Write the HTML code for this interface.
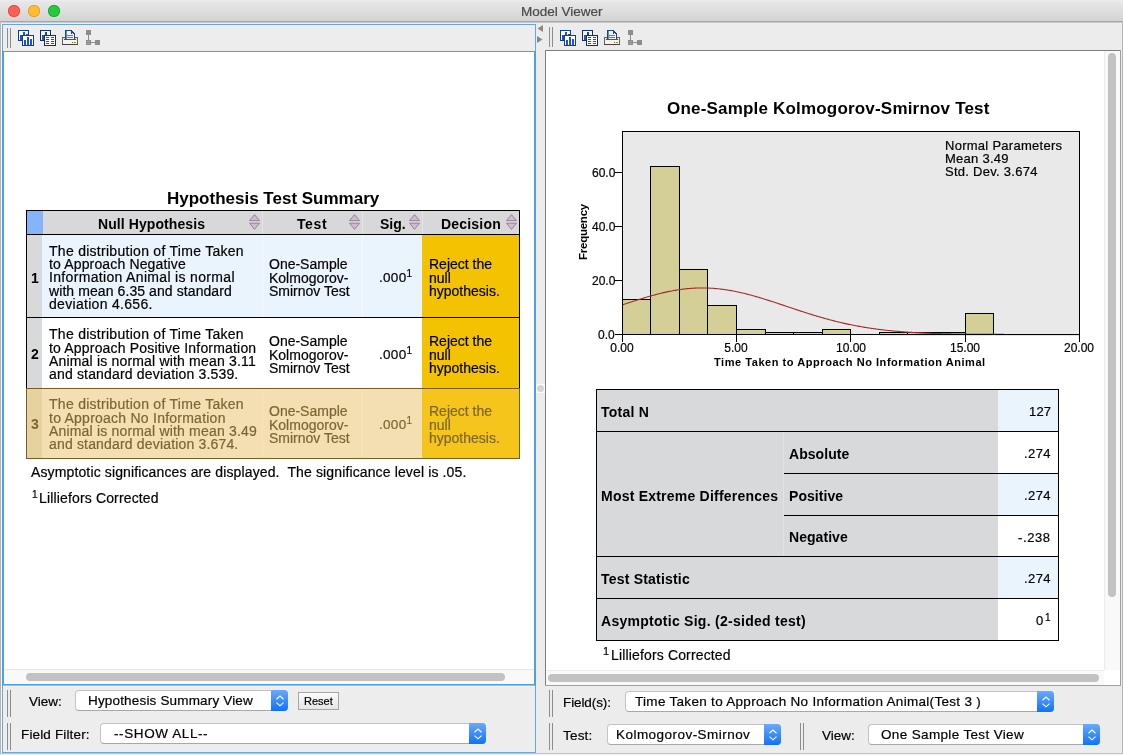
<!DOCTYPE html>
<html><head><meta charset="utf-8">
<style>
*{box-sizing:border-box;margin:0;padding:0}
html,body{width:1123px;height:755px;overflow:hidden}
body{position:relative;background:#ececec;font-family:"Liberation Sans",sans-serif;color:#000;font-size:14px}
.a{position:absolute}
.t{position:absolute;white-space:pre;line-height:1;will-change:transform;-webkit-text-stroke:0.2px currentColor}
.t[style*="bold"]{-webkit-text-stroke:0}
</style></head><body>
<div class="a" style="left:0px;top:0px;width:1123px;height:755px;background:#ececec;"></div>
<div class="a" style="left:0px;top:22px;width:1px;height:732px;background:#b4b4b4;"></div>
<div class="a" style="left:1px;top:22px;width:1px;height:731px;background:#f7f7f7;"></div>
<div class="a" style="left:1122px;top:22px;width:1px;height:733px;background:#b4b4b4;"></div>
<div class="a" style="left:0px;top:753px;width:1123px;height:1px;background:#c2c2c2;"></div>
<div class="a" style="left:0px;top:754px;width:1123px;height:1px;background:#f2f2f2;"></div>
<div class="a" style="left:0;top:0;width:1123px;height:23px;border-radius:5px 5px 0 0;background:linear-gradient(#f0f0f0 0px,#e8e8e8 1px,#d4d4d4 20px);"></div>
<div class="a" style="left:0px;top:21px;width:1123px;height:1px;background:#a6a6a6;"></div>
<div class="a" style="left:0px;top:22px;width:1123px;height:1px;background:#cbcbcb;"></div>
<div class="a" style="left:8px;top:5px;width:12px;height:12px;border-radius:50%;background:#fe5f57;box-shadow:inset 0 0 0 0.8px #e0443e"></div>
<div class="a" style="left:28px;top:5px;width:12px;height:12px;border-radius:50%;background:#febc2e;box-shadow:inset 0 0 0 0.8px #dc9d1c"></div>
<div class="a" style="left:48px;top:5px;width:12px;height:12px;border-radius:50%;background:#28c840;box-shadow:inset 0 0 0 0.8px #14a524"></div>
<div class="t" style="top:5px;font-size:13.5px;left:521px;color:#4a4a4a;">Model Viewer</div>
<div class="a" style="left:2px;top:24px;width:534px;height:729px;background:#6aa5dd;"></div>
<div class="a" style="left:3px;top:25px;width:532px;height:26px;background:#ededed;"></div>
<div class="a" style="left:3px;top:51px;width:532px;height:1px;background:#4e9fe4;"></div>
<div class="a" style="left:3px;top:52px;width:532px;height:617px;background:#ffffff;"></div>
<div class="a" style="left:3px;top:52px;width:1px;height:633px;background:#4e9fe4;"></div>
<div class="a" style="left:2px;top:52px;width:1px;height:633px;background:#4e9fe4;"></div>
<div class="a" style="left:4px;top:669px;width:531px;height:1px;background:#e8e8e8;"></div>
<div class="a" style="left:4px;top:670px;width:531px;height:14px;background:#f9f9f9;"></div>
<div class="a" style="left:26px;top:673px;width:479px;height:8px;border-radius:4px;background:#c2c2c2"></div>
<div class="a" style="left:3px;top:685px;width:532px;height:67px;background:#ededed;"></div>
<div class="a" style="left:3px;top:684px;width:532px;height:1px;background:#4e9fe4;"></div>
<div class="a" style="left:3px;top:685px;width:532px;height:1px;background:#8fc0ee;"></div>
<div class="a" style="left:534px;top:52px;width:1px;height:633px;background:#4e9fe4;"></div>
<div class="a" style="left:535px;top:51px;width:1px;height:635px;background:#4e9fe4;"></div>
<div class="a" style="left:2px;top:51px;width:534px;height:1px;background:#4e9fe4;"></div>
<div class="a" style="left:3px;top:686px;width:532px;height:1px;background:#f5f2ef;"></div>
<div class="a" style="left:7px;top:28px;width:1px;height:20px;background:#8d8d8d;"></div>
<div class="a" style="left:7px;top:690px;width:1px;height:27px;background:#8d8d8d;"></div>
<div class="a" style="left:7px;top:723px;width:1px;height:27px;background:#8d8d8d;"></div>
<div class="a" style="left:10px;top:28px;width:1px;height:20px;background:#8d8d8d;"></div>
<div class="a" style="left:10px;top:690px;width:1px;height:27px;background:#8d8d8d;"></div>
<div class="a" style="left:10px;top:723px;width:1px;height:27px;background:#8d8d8d;"></div>
<div class="a" style="left:545px;top:50px;width:576px;height:636px;background:#7e7e7e;"></div>
<div class="a" style="left:546px;top:51px;width:574px;height:634px;background:#ffffff;"></div>
<div class="a" style="left:1120px;top:50px;width:1px;height:636px;background:#a0a0a0;"></div>
<div class="a" style="left:545px;top:685px;width:576px;height:1px;background:#a0a0a0;"></div>
<div class="a" style="left:1104px;top:51px;width:1px;height:619px;background:#ececec;"></div>
<div class="a" style="left:1105px;top:51px;width:15px;height:619px;background:#f9f9f9;"></div>
<div class="a" style="left:1108px;top:53px;width:8px;height:544px;border-radius:4px;background:#c2c2c2"></div>
<div class="a" style="left:546px;top:670px;width:558px;height:1px;background:#ececec;"></div>
<div class="a" style="left:546px;top:671px;width:558px;height:14px;background:#f9f9f9;"></div>
<div class="a" style="left:548px;top:674px;width:551px;height:8px;border-radius:4px;background:#c2c2c2"></div>
<div class="a" style="left:549px;top:27px;width:1px;height:20px;background:#8d8d8d;"></div>
<div class="a" style="left:549px;top:690px;width:1px;height:27px;background:#8d8d8d;"></div>
<div class="a" style="left:549px;top:723px;width:1px;height:27px;background:#8d8d8d;"></div>
<div class="a" style="left:552px;top:27px;width:1px;height:20px;background:#8d8d8d;"></div>
<div class="a" style="left:552px;top:690px;width:1px;height:27px;background:#8d8d8d;"></div>
<div class="a" style="left:552px;top:723px;width:1px;height:27px;background:#8d8d8d;"></div>
<div class="a" style="left:800px;top:723px;width:1px;height:27px;background:#8d8d8d;"></div>
<div class="a" style="left:803px;top:723px;width:1px;height:27px;background:#8d8d8d;"></div>
<svg class="a" style="left:536px;top:24px" width="9" height="22"><path d="M7,1 L1.5,4.5 L7,8 Z" fill="#878787"/><path d="M1,12 L6.5,15.5 L1,19 Z" fill="#878787"/></svg>
<div class="a" style="left:536px;top:384px;width:9px;height:9px;background:#fbfbfb;"></div>
<div class="a" style="left:537px;top:385px;width:7px;height:7px;border-radius:50%;background:#d4d4d4"></div>
<svg class="a" style="left:0;top:0" width="1123" height="60" shape-rendering="crispEdges"><g id="icons">
  <rect x="18.5" y="30.5" width="10" height="10" fill="#fff" stroke="#0d3c9e"/>
  <rect x="20" y="35" width="2" height="5" fill="#1d52d8"/><rect x="23" y="32" width="2" height="8" fill="#1d52d8"/><rect x="26" y="34" width="2" height="6" fill="#1d52d8"/>
  <rect x="22.5" y="35.5" width="11" height="10" fill="#fff" stroke="#0d3c9e"/>
  <rect x="24" y="40" width="2" height="5" fill="#1d52d8"/><rect x="27" y="37" width="2" height="8" fill="#1d52d8"/><rect x="30" y="39" width="2" height="6" fill="#1d52d8"/>
  <rect x="40.5" y="30.5" width="10" height="10" fill="#eef6ff" stroke="#0c2f6c"/>
  <rect x="42" y="35" width="2" height="5" fill="#3a4fb0"/><rect x="45" y="32" width="2" height="8" fill="#24477a"/>
  <rect x="44.5" y="35.5" width="11" height="10" fill="#fff" stroke="#0c2f6c"/>
  <g fill="#d0102a"><rect x="46" y="37" width="3" height="1"/><rect x="51" y="37" width="3" height="1"/><rect x="46" y="39" width="3" height="1"/><rect x="51" y="39" width="3" height="1"/><rect x="46" y="41" width="3" height="1"/><rect x="51" y="41" width="3" height="1"/><rect x="46" y="43" width="3" height="1"/><rect x="51" y="43" width="3" height="1"/></g>
  <rect x="62.5" y="37.5" width="15" height="7" fill="#e4e0dc" stroke="#6a605c"/>
  <rect x="62" y="44" width="16" height="1" fill="#4a403e"/>
  <path d="M65.5,39.5 V30.5 H71.5 L74.5,33.5 V39.5" fill="#eef3fa" stroke="#1c4870"/>
  <rect x="64" y="39" width="12" height="1" fill="#5a504c"/>
  <rect x="63" y="40" width="14" height="4" fill="#f6f4f0"/>
  <path d="M71,30.5 L71,34 L74.5,34 Z" fill="#1c4870"/><rect x="72" y="33" width="1" height="0.5" fill="#cfe0f0"/>
  <rect x="66" y="31" width="1" height="8" fill="#6a8cb0"/>
  <rect x="67" y="35" width="6" height="1" fill="#5b7fa8"/><rect x="67" y="37" width="6" height="1" fill="#5b7fa8"/>
  <rect x="72" y="42" width="1" height="1" fill="#f02010"/><rect x="74" y="42" width="2" height="1" fill="#40b040"/>
  <rect x="86" y="30" width="5" height="5" fill="#8c8c8c"/>
  <rect x="88" y="35" width="1" height="5" fill="#8c8c8c"/>
  <rect x="86" y="40" width="5" height="5" fill="#8c8c8c"/>
  <rect x="87" y="41" width="3" height="1" fill="#a4a4a4"/><rect x="87" y="43" width="3" height="1" fill="#a4a4a4"/>
  <rect x="91" y="42" width="4" height="1" fill="#8c8c8c"/>
  <rect x="95" y="40" width="5" height="5" fill="#8c8c8c"/>
</g><use href="#icons" x="542" y="0"/></svg>
<div class="t" style="top:190px;font-size:17px;left:167px;font-weight:bold;">Hypothesis Test Summary</div>
<div class="a" style="left:26px;top:210px;width:494px;height:249px;background:#000;"></div>
<div class="a" style="left:27px;top:211px;width:16px;height:23px;background:#83b5f8;"></div>
<div class="a" style="left:43px;top:211px;width:476px;height:23px;background:#d8d8da;"></div>
<div class="a" style="left:27px;top:235px;width:15px;height:82px;background:#d8d9db;"></div>
<div class="a" style="left:42px;top:235px;width:380px;height:82px;background:#eaf4fd;"></div>
<div class="a" style="left:422px;top:235px;width:97px;height:82px;background:#f3c200;"></div>
<div class="a" style="left:27px;top:318px;width:15px;height:70px;background:#d8d9db;"></div>
<div class="a" style="left:42px;top:318px;width:380px;height:70px;background:#ffffff;"></div>
<div class="a" style="left:422px;top:318px;width:97px;height:70px;background:#f3c200;"></div>
<div class="a" style="left:26px;top:388px;width:494px;height:71px;background:#7b5d24;"></div>
<div class="a" style="left:27px;top:389px;width:15px;height:69px;background:#e6d29e;"></div>
<div class="a" style="left:42px;top:389px;width:380px;height:69px;background:#f3dfb1;"></div>
<div class="a" style="left:422px;top:389px;width:97px;height:69px;background:#f5c51c;"></div>
<div class="a" style="left:262px;top:211px;width:1px;height:23px;background:#e6e6e8;"></div>
<div class="a" style="left:362px;top:211px;width:1px;height:23px;background:#e6e6e8;"></div>
<div class="a" style="left:422px;top:211px;width:1px;height:23px;background:#e6e6e8;"></div>
<div class="a" style="left:262px;top:235px;width:1px;height:82px;background:#f2f8fe;"></div>
<div class="a" style="left:262px;top:389px;width:1px;height:69px;background:#f6e5bb;"></div>
<div class="a" style="left:362px;top:235px;width:1px;height:82px;background:#f2f8fe;"></div>
<div class="a" style="left:362px;top:389px;width:1px;height:69px;background:#f6e5bb;"></div>
<div class="t" style="top:217px;font-size:14px;left:98px;font-weight:bold;letter-spacing:0.08px;">Null Hypothesis</div>
<div class="t" style="top:217px;font-size:14px;left:297px;font-weight:bold;letter-spacing:0.6px;">Test</div>
<div class="t" style="top:217px;font-size:14px;left:380px;font-weight:bold;">Sig.</div>
<div class="t" style="top:217px;font-size:14px;left:441px;font-weight:bold;letter-spacing:0.2px;">Decision</div>
<div class="t" style="top:271px;font-size:14px;left:31px;font-weight:bold;">1</div>
<div class="t" style="top:244px;font-size:14px;left:49px;letter-spacing:0.28px;">The distribution of Time Taken</div>
<div class="t" style="top:257px;font-size:14px;left:49px;letter-spacing:0.15px;">to Approach Negative</div>
<div class="t" style="top:270px;font-size:14px;left:49px;letter-spacing:0.33px;">Information Animal is normal</div>
<div class="t" style="top:284px;font-size:14px;left:49px;letter-spacing:0.085px;">with mean 6.35 and standard</div>
<div class="t" style="top:297px;font-size:14px;left:49px;letter-spacing:0.3px;">deviation 4.656.</div>
<div class="t" style="top:257px;font-size:14px;left:269px;">One-Sample</div>
<div class="t" style="top:271px;font-size:14px;left:269px;">Kolmogorov-</div>
<div class="t" style="top:284px;font-size:14px;left:269px;">Smirnov Test</div>
<div class="t" style="top:271px;font-size:13.5px;left:379px;letter-spacing:0.3px;">.000<span style="font-size:10px;position:relative;top:-5px">1</span></div>
<div class="t" style="top:257px;font-size:14px;left:429px;">Reject the</div>
<div class="t" style="top:271px;font-size:14px;left:429px;">null</div>
<div class="t" style="top:284px;font-size:14px;left:429px;">hypothesis.</div>
<div class="t" style="top:347px;font-size:14px;left:31px;font-weight:bold;">2</div>
<div class="t" style="top:327px;font-size:14px;left:49px;letter-spacing:0.28px;">The distribution of Time Taken</div>
<div class="t" style="top:341px;font-size:14px;left:49px;letter-spacing:0.18px;">to Approach Positive Information</div>
<div class="t" style="top:354px;font-size:14px;left:49px;letter-spacing:0.18px;">Animal is normal with mean 3.11</div>
<div class="t" style="top:367px;font-size:14px;left:49px;letter-spacing:0.17px;">and standard deviation 3.539.</div>
<div class="t" style="top:334px;font-size:14px;left:269px;">One-Sample</div>
<div class="t" style="top:348px;font-size:14px;left:269px;">Kolmogorov-</div>
<div class="t" style="top:361px;font-size:14px;left:269px;">Smirnov Test</div>
<div class="t" style="top:348px;font-size:13.5px;left:379px;letter-spacing:0.3px;">.000<span style="font-size:10px;position:relative;top:-5px">1</span></div>
<div class="t" style="top:334px;font-size:14px;left:429px;">Reject the</div>
<div class="t" style="top:348px;font-size:14px;left:429px;">null</div>
<div class="t" style="top:361px;font-size:14px;left:429px;">hypothesis.</div>
<div class="t" style="top:417px;font-size:14px;left:31px;font-weight:bold;color:#7b6634;">3</div>
<div class="t" style="top:397px;font-size:14px;left:49px;letter-spacing:0.28px;color:#7b6634;">The distribution of Time Taken</div>
<div class="t" style="top:411px;font-size:14px;left:49px;letter-spacing:0.24px;color:#7b6634;">to Approach No Information</div>
<div class="t" style="top:424px;font-size:14px;left:49px;letter-spacing:0.18px;color:#7b6634;">Animal is normal with mean 3.49</div>
<div class="t" style="top:437px;font-size:14px;left:49px;letter-spacing:0.17px;color:#7b6634;">and standard deviation 3.674.</div>
<div class="t" style="top:404px;font-size:14px;left:269px;color:#7b6634;">One-Sample</div>
<div class="t" style="top:418px;font-size:14px;left:269px;color:#7b6634;">Kolmogorov-</div>
<div class="t" style="top:431px;font-size:14px;left:269px;color:#7b6634;">Smirnov Test</div>
<div class="t" style="top:418px;font-size:13.5px;left:379px;letter-spacing:0.3px;color:#7b6634;">.000<span style="font-size:10px;position:relative;top:-5px">1</span></div>
<div class="t" style="top:404px;font-size:14px;left:429px;color:#7b6634;">Reject the</div>
<div class="t" style="top:418px;font-size:14px;left:429px;color:#7b6634;">null</div>
<div class="t" style="top:431px;font-size:14px;left:429px;color:#7b6634;">hypothesis.</div>
<div class="t" style="top:465px;font-size:14px;left:31px;letter-spacing:0.13px;">Asymptotic significances are displayed.  The significance level is .05.</div>
<div class="t" style="top:490px;font-size:10px;left:32px;">1</div>
<div class="t" style="top:491px;font-size:14px;left:39px;letter-spacing:0.15px;">Lilliefors Corrected</div>
<svg class="a" style="left:0;top:0" width="600" height="240"><defs><g id="sort"><path d="M0.5,6.6 L5.5,0.6 L10.5,6.6 Z M0.5,9.2 L5.5,15.4 L10.5,9.2 Z" fill="#cdbccf" stroke="#8e7b92" stroke-width="0.9"/></g></defs><use href="#sort" x="249" y="214"/><use href="#sort" x="349" y="214"/><use href="#sort" x="409" y="214"/><use href="#sort" x="506" y="214"/></svg>
<div class="t" style="top:100px;font-size:17px;left:667px;font-weight:bold;letter-spacing:0.19px;">One-Sample Kolmogorov-Smirnov Test</div>
<svg class="a" style="left:0;top:0" width="1123" height="400">
 <rect x="622" y="131" width="458" height="204" fill="#e9e9e9"/>
 <g fill="#d3cf97" stroke="#000" shape-rendering="crispEdges"><rect x="622.5" y="299.5" width="28" height="35"/><rect x="650.5" y="166.5" width="29" height="168"/><rect x="679.5" y="269.5" width="28" height="65"/><rect x="707.5" y="305.5" width="29" height="29"/><rect x="736.5" y="329.5" width="29" height="5"/><rect x="765.5" y="332.5" width="28" height="2"/><rect x="793.5" y="332.5" width="29" height="2"/><rect x="822.5" y="329.5" width="28" height="5"/><rect x="879.5" y="332.5" width="28" height="2"/><rect x="907.5" y="332.5" width="29" height="2"/><rect x="936.5" y="332.5" width="29" height="2"/><rect x="965.5" y="313.5" width="28" height="21"/></g>
 <path d="M622.50,304.86 L623.64,304.48 L624.79,304.09 L625.93,303.71 L627.07,303.33 L628.22,302.95 L629.36,302.57 L630.50,302.20 L631.65,301.82 L632.79,301.45 L633.93,301.08 L635.08,300.71 L636.22,300.34 L637.36,299.98 L638.51,299.62 L639.65,299.26 L640.79,298.90 L641.94,298.55 L643.08,298.20 L644.22,297.85 L645.37,297.51 L646.51,297.17 L647.65,296.83 L648.80,296.50 L649.94,296.17 L651.08,295.85 L652.23,295.53 L653.37,295.22 L654.51,294.91 L655.66,294.61 L656.80,294.31 L657.94,294.01 L659.09,293.73 L660.23,293.44 L661.37,293.17 L662.52,292.90 L663.66,292.63 L664.80,292.37 L665.95,292.12 L667.09,291.87 L668.23,291.63 L669.38,291.40 L670.52,291.17 L671.66,290.95 L672.81,290.74 L673.95,290.53 L675.09,290.34 L676.24,290.15 L677.38,289.96 L678.52,289.79 L679.67,289.62 L680.81,289.46 L681.95,289.30 L683.10,289.16 L684.24,289.02 L685.38,288.89 L686.53,288.77 L687.67,288.66 L688.81,288.55 L689.96,288.46 L691.10,288.37 L692.24,288.29 L693.39,288.22 L694.53,288.16 L695.67,288.10 L696.82,288.06 L697.96,288.02 L699.10,287.99 L700.25,287.97 L701.39,287.96 L702.53,287.96 L703.68,287.96 L704.82,287.98 L705.96,288.00 L707.11,288.03 L708.25,288.07 L709.39,288.12 L710.54,288.18 L711.68,288.25 L712.82,288.32 L713.97,288.40 L715.11,288.50 L716.25,288.59 L717.40,288.70 L718.54,288.82 L719.68,288.94 L720.83,289.08 L721.97,289.22 L723.11,289.36 L724.26,289.52 L725.40,289.68 L726.54,289.85 L727.69,290.03 L728.83,290.22 L729.97,290.41 L731.12,290.62 L732.26,290.82 L733.40,291.04 L734.55,291.26 L735.69,291.49 L736.84,291.73 L737.98,291.97 L739.12,292.22 L740.27,292.47 L741.41,292.74 L742.55,293.00 L743.70,293.28 L744.84,293.56 L745.98,293.84 L747.13,294.13 L748.27,294.43 L749.41,294.73 L750.56,295.03 L751.70,295.34 L752.84,295.66 L753.99,295.98 L755.13,296.31 L756.27,296.63 L757.42,296.97 L758.56,297.30 L759.70,297.64 L760.85,297.99 L761.99,298.34 L763.13,298.69 L764.28,299.04 L765.42,299.40 L766.56,299.76 L767.71,300.12 L768.85,300.49 L769.99,300.86 L771.14,301.23 L772.28,301.60 L773.42,301.97 L774.57,302.35 L775.71,302.72 L776.85,303.10 L778.00,303.48 L779.14,303.86 L780.28,304.25 L781.43,304.63 L782.57,305.01 L783.71,305.39 L784.86,305.78 L786.00,306.16 L787.14,306.55 L788.29,306.93 L789.43,307.32 L790.57,307.70 L791.72,308.08 L792.86,308.46 L794.00,308.85 L795.15,309.23 L796.29,309.61 L797.43,309.98 L798.58,310.36 L799.72,310.74 L800.86,311.11 L802.01,311.48 L803.15,311.85 L804.29,312.22 L805.44,312.59 L806.58,312.96 L807.72,313.32 L808.87,313.68 L810.01,314.04 L811.15,314.39 L812.30,314.75 L813.44,315.10 L814.58,315.44 L815.73,315.79 L816.87,316.13 L818.01,316.47 L819.16,316.81 L820.30,317.14 L821.44,317.47 L822.59,317.80 L823.73,318.12 L824.87,318.44 L826.02,318.76 L827.16,319.07 L828.30,319.38 L829.45,319.69 L830.59,319.99 L831.73,320.29 L832.88,320.59 L834.02,320.88 L835.16,321.17 L836.31,321.46 L837.45,321.74 L838.59,322.01 L839.74,322.29 L840.88,322.56 L842.02,322.82 L843.17,323.09 L844.31,323.35 L845.45,323.60 L846.60,323.85 L847.74,324.10 L848.88,324.34 L850.03,324.58 L851.17,324.82 L852.31,325.05 L853.46,325.27 L854.60,325.50 L855.74,325.72 L856.89,325.94 L858.03,326.15 L859.17,326.36 L860.32,326.56 L861.46,326.76 L862.60,326.96 L863.75,327.15 L864.89,327.34 L866.03,327.53 L867.18,327.71 L868.32,327.89 L869.46,328.07 L870.61,328.24 L871.75,328.41 L872.89,328.58 L874.04,328.74 L875.18,328.90 L876.32,329.05 L877.47,329.20 L878.61,329.35 L879.75,329.50 L880.90,329.64 L882.04,329.78 L883.18,329.92 L884.33,330.05 L885.47,330.18 L886.61,330.30 L887.76,330.43 L888.90,330.55 L890.04,330.67 L891.19,330.78 L892.33,330.89 L893.47,331.00 L894.62,331.11 L895.76,331.22 L896.90,331.32 L898.05,331.42 L899.19,331.51 L900.33,331.61 L901.48,331.70 L902.62,331.79 L903.76,331.87 L904.91,331.96 L906.05,332.04 L907.19,332.12 L908.34,332.20 L909.48,332.27 L910.62,332.35 L911.77,332.42 L912.91,332.49 L914.05,332.56 L915.20,332.62 L916.34,332.69 L917.48,332.75 L918.63,332.81 L919.77,332.87 L920.91,332.92 L922.06,332.98 L923.20,333.03 L924.34,333.08 L925.49,333.13 L926.63,333.18 L927.77,333.23 L928.92,333.28 L930.06,333.32 L931.20,333.36 L932.35,333.40 L933.49,333.44 L934.63,333.48 L935.78,333.52 L936.92,333.56 L938.06,333.59 L939.21,333.63 L940.35,333.66 L941.49,333.69 L942.64,333.72 L943.78,333.75 L944.92,333.78 L946.07,333.81 L947.21,333.84 L948.35,333.86 L949.50,333.89 L950.64,333.91 L951.78,333.93 L952.93,333.96 L954.07,333.98 L955.21,334.00 L956.36,334.02 L957.50,334.04 L958.64,334.06 L959.79,334.08 L960.93,334.09 L962.07,334.11 L963.22,334.13 L964.36,334.14 L965.50,334.16 L966.65,334.17 L967.79,334.18 L968.94,334.20 L970.08,334.21 L971.22,334.22 L972.37,334.23 L973.51,334.25 L974.65,334.26 L975.80,334.27 L976.94,334.28 L978.08,334.29 L979.23,334.30 L980.37,334.31 L981.51,334.31 L982.66,334.32 L983.80,334.33 L984.94,334.34 L986.09,334.35 L987.23,334.35 L988.37,334.36 L989.52,334.37 L990.66,334.37 L991.80,334.38 L992.95,334.38 L994.09,334.39 L995.23,334.39 L996.38,334.40 L997.52,334.40 L998.66,334.41 L999.81,334.41 L1000.95,334.42 L1002.09,334.42 L1003.24,334.42 L1004.38,334.43 L1005.52,334.43 L1006.67,334.43 L1007.81,334.44 L1008.95,334.44 L1010.10,334.44 L1011.24,334.45 L1012.38,334.45 L1013.53,334.45 L1014.67,334.45 L1015.81,334.46 L1016.96,334.46 L1018.10,334.46 L1019.24,334.46 L1020.39,334.46 L1021.53,334.47 L1022.67,334.47 L1023.82,334.47 L1024.96,334.47 L1026.10,334.47 L1027.25,334.47 L1028.39,334.48 L1029.53,334.48 L1030.68,334.48 L1031.82,334.48 L1032.96,334.48 L1034.11,334.48 L1035.25,334.48 L1036.39,334.48 L1037.54,334.48 L1038.68,334.48 L1039.82,334.49 L1040.97,334.49 L1042.11,334.49 L1043.25,334.49 L1044.40,334.49 L1045.54,334.49 L1046.68,334.49 L1047.83,334.49 L1048.97,334.49 L1050.11,334.49 L1051.26,334.49 L1052.40,334.49 L1053.54,334.49 L1054.69,334.49 L1055.83,334.49 L1056.97,334.49 L1058.12,334.49 L1059.26,334.49 L1060.40,334.49 L1061.55,334.50 L1062.69,334.50 L1063.83,334.50 L1064.98,334.50 L1066.12,334.50 L1067.26,334.50 L1068.41,334.50 L1069.55,334.50 L1070.69,334.50 L1071.84,334.50 L1072.98,334.50 L1074.12,334.50 L1075.27,334.50 L1076.41,334.50 L1077.55,334.50 L1078.70,334.50 L1079.84,334.50" fill="none" stroke="#a02a2c" stroke-width="1.1"/>
 <rect x="622.5" y="131.5" width="457" height="203" fill="none" stroke="#000" shape-rendering="crispEdges"/>
 <rect x="880" y="335" width="199" height="1" fill="rgba(160,42,44,0.15)"/>
 <g stroke="#000" shape-rendering="crispEdges">
  <line x1="615" y1="334.5" x2="622" y2="334.5"/><line x1="615" y1="280.5" x2="622" y2="280.5"/>
  <line x1="615" y1="226.5" x2="622" y2="226.5"/><line x1="615" y1="172.5" x2="622" y2="172.5"/>
  <line x1="622.5" y1="335" x2="622.5" y2="342"/><line x1="736.5" y1="335" x2="736.5" y2="342"/>
  <line x1="850.5" y1="335" x2="850.5" y2="342"/><line x1="965.5" y1="335" x2="965.5" y2="342"/>
  <line x1="1079.5" y1="335" x2="1079.5" y2="342"/>
 </g></svg>
<div class="t" style="top:139px;font-size:13px;left:945px;letter-spacing:0.27px;">Normal Parameters</div>
<div class="t" style="top:152px;font-size:13px;left:945px;letter-spacing:0.27px;">Mean 3.49</div>
<div class="t" style="top:165px;font-size:13px;left:945px;letter-spacing:0.27px;">Std. Dev. 3.674</div>
<div class="t" style="top:167px;font-size:12px;right:508px;">60.0</div>
<div class="t" style="top:221px;font-size:12px;right:508px;">40.0</div>
<div class="t" style="top:275px;font-size:12px;right:508px;">20.0</div>
<div class="t" style="top:329px;font-size:12px;right:508px;">0.0</div>
<div class="t" style="left:572px;width:100px;text-align:center;top:342px;font-size:12px;will-change:transform">0.00</div>
<div class="t" style="left:686px;width:100px;text-align:center;top:342px;font-size:12px;will-change:transform">5.00</div>
<div class="t" style="left:800.5px;width:100px;text-align:center;top:342px;font-size:12px;will-change:transform">10.00</div>
<div class="t" style="left:915px;width:100px;text-align:center;top:342px;font-size:12px;will-change:transform">15.00</div>
<div class="t" style="left:1029px;width:100px;text-align:center;top:342px;font-size:12px;will-change:transform">20.00</div>
<div class="t" style="top:357px;font-size:11px;left:714px;font-weight:bold;letter-spacing:0.55px;">Time Taken to Approach No Information Animal</div>
<div class="t" style="left:555px;top:226px;width:58px;height:12px;font-size:11.5px;font-weight:bold;letter-spacing:-0.25px;transform:rotate(-90deg);transform-origin:50% 50%;text-align:center">Frequency</div>
<div class="a" style="left:596px;top:389px;width:463px;height:252px;background:#000;"></div>
<div class="a" style="left:597px;top:390px;width:401px;height:41px;background:#d8d9db;"></div>
<div class="a" style="left:998px;top:390px;width:60px;height:41px;background:#eaf4fd;"></div>
<div class="a" style="left:597px;top:432px;width:401px;height:124px;background:#d8d9db;"></div>
<div class="a" style="left:998px;top:432px;width:60px;height:41px;background:#fff;"></div>
<div class="a" style="left:998px;top:474px;width:60px;height:41px;background:#eaf4fd;"></div>
<div class="a" style="left:998px;top:516px;width:60px;height:40px;background:#fff;"></div>
<div class="a" style="left:784px;top:473px;width:274px;height:1px;background:#000;"></div>
<div class="a" style="left:784px;top:515px;width:274px;height:1px;background:#000;"></div>
<div class="a" style="left:783px;top:432px;width:1px;height:124px;background:#e3e3e5;"></div>
<div class="a" style="left:597px;top:557px;width:401px;height:41px;background:#d8d9db;"></div>
<div class="a" style="left:998px;top:557px;width:60px;height:41px;background:#eaf4fd;"></div>
<div class="a" style="left:597px;top:599px;width:401px;height:41px;background:#d8d9db;"></div>
<div class="a" style="left:998px;top:599px;width:60px;height:41px;background:#fff;"></div>
<div class="t" style="top:405px;font-size:14px;left:601px;font-weight:bold;letter-spacing:0.26px;">Total N</div>
<div class="t" style="top:489px;font-size:14px;left:601px;font-weight:bold;letter-spacing:0.22px;">Most Extreme Differences</div>
<div class="t" style="top:447px;font-size:14px;left:789px;font-weight:bold;letter-spacing:0.05px;">Absolute</div>
<div class="t" style="top:489px;font-size:14px;left:789px;font-weight:bold;letter-spacing:0.05px;">Positive</div>
<div class="t" style="top:530px;font-size:14px;left:789px;font-weight:bold;letter-spacing:0.05px;">Negative</div>
<div class="t" style="top:572px;font-size:14px;left:601px;font-weight:bold;letter-spacing:0.2px;">Test Statistic</div>
<div class="t" style="top:614px;font-size:14px;left:601px;font-weight:bold;letter-spacing:0.27px;">Asymptotic Sig. (2-sided test)</div>
<div class="t" style="top:405px;font-size:13px;right:72px;letter-spacing:0.2px;">127</div>
<div class="t" style="top:447px;font-size:13px;right:72px;letter-spacing:0.4px;">.274</div>
<div class="t" style="top:489px;font-size:13px;right:72px;letter-spacing:0.4px;">.274</div>
<div class="t" style="top:531px;font-size:13px;right:72px;letter-spacing:0.6px;">-.238</div>
<div class="t" style="top:572px;font-size:13px;right:72px;letter-spacing:0.4px;">.274</div>
<div class="t" style="top:614px;font-size:13px;right:80px;">0</div>
<div class="t" style="top:613px;font-size:10px;left:1045px;">1</div>
<div class="t" style="top:646px;font-size:11px;left:603px;">1</div>
<div class="t" style="top:648px;font-size:14px;left:610.5px;letter-spacing:0.15px;">Lilliefors Corrected</div>
<div class="t" style="top:695px;font-size:13.5px;left:28.5px;">View:</div>
<div class="t" style="top:728px;font-size:13.5px;left:21px;letter-spacing:0.15px;">Field Filter:</div>
<div class="a" style="left:75px;top:690px;width:213px;height:21px;border-radius:4px;background:#fff;border:1px solid #c3c3c3;border-bottom-color:#a8a8a8"></div>
<div class="a" style="left:271px;top:690px;width:17px;height:21px;border-radius:0 4px 4px 0;background:linear-gradient(#6aaaf9,#1172f8)"></div>
<svg class="a" style="left:274.5px;top:693.5px" width="10" height="14"><path d="M1.5,5.2 L5,2.1 L8.5,5.2 M1.5,8.6 L5,11.8 L8.5,8.6" fill="none" stroke="#fff" stroke-width="1.15"/></svg>
<div class="t" style="top:694px;font-size:13.5px;left:87.5px;letter-spacing:0.17px;">Hypothesis Summary View</div>
<div class="a" style="left:298px;top:692px;width:41px;height:18px;background:linear-gradient(#fbfbfb,#e6e6e6);border:1px solid #a6a6a6"></div>
<div class="t" style="top:696px;font-size:11px;left:303.5px;">Reset</div>
<div class="a" style="left:100px;top:723px;width:386px;height:21px;border-radius:4px;background:#fff;border:1px solid #c3c3c3;border-bottom-color:#a8a8a8"></div>
<div class="a" style="left:469px;top:723px;width:17px;height:21px;border-radius:0 4px 4px 0;background:linear-gradient(#6aaaf9,#1172f8)"></div>
<svg class="a" style="left:472.5px;top:726.5px" width="10" height="14"><path d="M1.5,5.2 L5,2.1 L8.5,5.2 M1.5,8.6 L5,11.8 L8.5,8.6" fill="none" stroke="#fff" stroke-width="1.15"/></svg>
<div class="t" style="top:727px;font-size:13.5px;left:114px;letter-spacing:0.6px;">--SHOW ALL--</div>
<div class="t" style="top:696px;font-size:13.5px;left:563px;letter-spacing:-0.1px;">Field(s):</div>
<div class="a" style="left:625px;top:691px;width:429px;height:21px;border-radius:4px;background:#fff;border:1px solid #c3c3c3;border-bottom-color:#a8a8a8"></div>
<div class="a" style="left:1037px;top:691px;width:17px;height:21px;border-radius:0 4px 4px 0;background:linear-gradient(#6aaaf9,#1172f8)"></div>
<svg class="a" style="left:1040.5px;top:694.5px" width="10" height="14"><path d="M1.5,5.2 L5,2.1 L8.5,5.2 M1.5,8.6 L5,11.8 L8.5,8.6" fill="none" stroke="#fff" stroke-width="1.15"/></svg>
<div class="t" style="top:695px;font-size:13.5px;left:634.5px;letter-spacing:0.3px;">Time Taken to Approach No Information Animal(Test 3 )</div>
<div class="t" style="top:729px;font-size:13.5px;left:563px;letter-spacing:0.2px;">Test:</div>
<div class="a" style="left:607px;top:724px;width:174px;height:21px;border-radius:4px;background:#fff;border:1px solid #c3c3c3;border-bottom-color:#a8a8a8"></div>
<div class="a" style="left:764px;top:724px;width:17px;height:21px;border-radius:0 4px 4px 0;background:linear-gradient(#6aaaf9,#1172f8)"></div>
<svg class="a" style="left:767.5px;top:727.5px" width="10" height="14"><path d="M1.5,5.2 L5,2.1 L8.5,5.2 M1.5,8.6 L5,11.8 L8.5,8.6" fill="none" stroke="#fff" stroke-width="1.15"/></svg>
<div class="t" style="top:728px;font-size:13.5px;left:615.5px;letter-spacing:0.46px;">Kolmogorov-Smirnov</div>
<div class="t" style="top:729px;font-size:13.5px;left:821.5px;">View:</div>
<div class="a" style="left:868px;top:724px;width:232px;height:21px;border-radius:4px;background:#fff;border:1px solid #c3c3c3;border-bottom-color:#a8a8a8"></div>
<div class="a" style="left:1083px;top:724px;width:17px;height:21px;border-radius:0 4px 4px 0;background:linear-gradient(#6aaaf9,#1172f8)"></div>
<svg class="a" style="left:1086.5px;top:727.5px" width="10" height="14"><path d="M1.5,5.2 L5,2.1 L8.5,5.2 M1.5,8.6 L5,11.8 L8.5,8.6" fill="none" stroke="#fff" stroke-width="1.15"/></svg>
<div class="t" style="top:728px;font-size:13.5px;left:881px;letter-spacing:0.35px;">One Sample Test View</div>
</body></html>
